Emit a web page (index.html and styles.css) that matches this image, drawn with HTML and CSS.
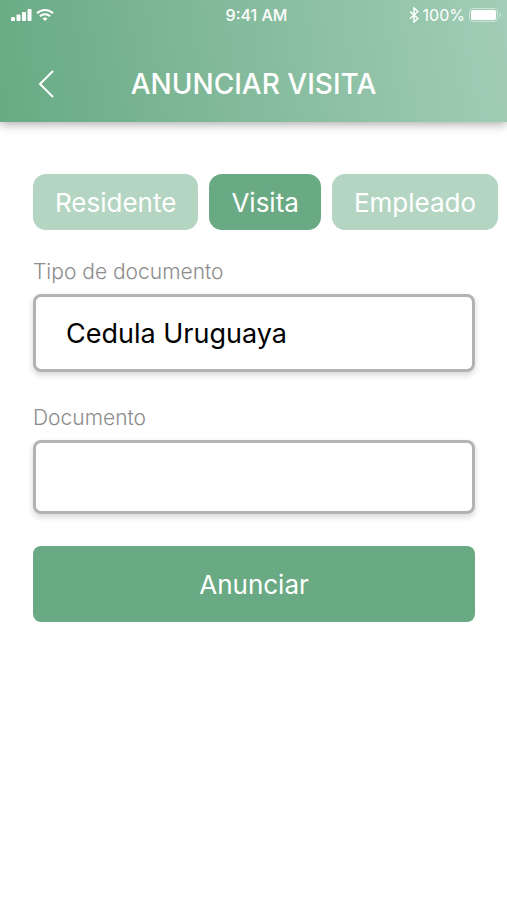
FILE: index.html
```html
<!DOCTYPE html>
<html lang="es">
<head>
  <meta charset="UTF-8">
  <meta name="viewport" content="width=device-width, initial-scale=1.0">
  <title>Anunciar visita</title>
  <link rel="stylesheet" href="styles.css">
</head>
<body>

  <header class="header">
    <div class="status">
      <div class="status-left">
        <svg width="21" height="14" viewBox="0 0 21 14" fill="currentColor">
          <rect x="0" y="9" width="4" height="4" rx="1"/>
          <rect x="5.500" y="6.500" width="4" height="6.500" rx="1"/>
          <rect x="11" y="4" width="4" height="9" rx="1"/>
          <rect x="16.500" y="1" width="4" height="12" rx="1"/>
        </svg>
        <svg width="18" height="14" viewBox="0 0 18 14" fill="none" stroke="currentColor" stroke-width="2">
          <path d="M1 5.3a11.5 11.5 0 0 1 16 0"/>
          <path d="M3.900 8.300a7.300 7.300 0 0 1 10.200 0"/>
          <path d="M9 13L6.500 10.600a3.600 3.600 0 0 1 5 0z" fill="currentColor" stroke="none"/>
        </svg>
      </div>
      <span class="hora">9:41 AM</span>
      <div class="status-right">
        <svg width="10" height="16" viewBox="0 0 10 16" fill="none" stroke="currentColor" stroke-width="1.500">
          <path d="M1 4.500l8 7-4 3.500V1l4 3.500-8 7"/>
        </svg>
        <span>100%</span>
        <svg width="33" height="14" viewBox="0 0 33 14">
          <rect x="0.500" y="0.500" width="28" height="13" rx="3.500" fill="none" stroke="currentColor" opacity="0.450"/>
          <rect x="2" y="2" width="25" height="10" rx="2" fill="currentColor"/>
          <path d="M30.500 5v4q1.500-.5 1.500-2t-1.500-2z" fill="currentColor" opacity="0.500"/>
        </svg>
      </div>
    </div>
    <div class="barra">
      <button class="volver" type="button" aria-label="Volver">
        <svg width="16" height="28" viewBox="0 0 16 28" fill="none" stroke="currentColor" stroke-width="2">
          <path d="M15 1L2 14l13 13"/>
        </svg>
      </button>
      <h1>ANUNCIAR VISITA</h1>
    </div>
  </header>

  <main class="contenido">
    <div class="tabs">
      <button class="tab" type="button">Residente</button>
      <button class="tab activo" type="button">Visita</button>
      <button class="tab" type="button">Empleado</button>
    </div>

    <form class="formulario">
      <label for="tipo">Tipo de documento</label>
      <select class="campo" id="tipo">
        <option>Cedula Uruguaya</option>
      </select>

      <label for="documento">Documento</label>
      <input class="campo" type="text" id="documento">

      <button class="anunciar" type="button">Anunciar</button>
    </form>
  </main>

</body>
</html>
```
FILE: styles.css
```css
* {
  box-sizing: border-box;
}

body {
  margin: 0;
  background: #fff;
  font-family: Inter, "Liberation Sans", sans-serif;
}

button,
input,
select {
  font-family: inherit;
}

svg {
  display: block;
}

.header {
  padding-bottom: 16px;
  background: linear-gradient(80deg, #68aa84, #a2cdb6);
  color: #fff;
  box-shadow: 0 2px 10px rgba(0, 0, 0, 0.35);
}

.status {
  display: grid;
  grid-template-columns: 1fr auto 1fr;
  align-items: center;
  height: 30px;
  padding: 0 5px 0 11px;
  font-size: 16px;
}

.status-left,
.status-right {
  display: flex;
  align-items: center;
  gap: 4px;
}

.status-right {
  justify-content: flex-end;
}

.hora {
  font-weight: 500;
}

.barra {
  display: grid;
  grid-template-columns: 64px 1fr 64px;
  align-items: center;
  height: 76px;
  padding-top: 32px;
}

.volver {
  justify-self: end;
  padding: 0;
  margin-right: 10px;
  border: none;
  background: none;
  color: #fff;
  cursor: pointer;
}

h1 {
  margin: 0;
  font-size: 28px;
  font-weight: 500;
  text-align: center;
}

.contenido {
  padding: 52px 32px 32px 33px;
}

.tabs {
  display: flex;
  gap: 11px;
}

.tab {
  flex: none;
  height: 56px;
  padding: 0 22px;
  border: none;
  border-radius: 13px;
  background: #b3d5c2;
  color: #fff;
  font-size: 26px;
  cursor: pointer;
}

.tab.activo {
  background: #69aa84;
}

.formulario {
  display: flex;
  flex-direction: column;
  margin-top: 28px;
}

label {
  margin-bottom: 8px;
  color: #8c8c8c;
  font-size: 21px;
  font-weight: 300;
  line-height: 28px;
}

.campo {
  width: 100%;
  height: 74px;
  margin-bottom: 32px;
  padding: 0 30px;
  border: 3px solid #b3b3b3;
  border-radius: 8px;
  background: #fff;
  box-shadow: 0 3px 6px rgba(0, 0, 0, 0.16);
  color: #000;
  font-size: 27px;
  appearance: none;
}

select.campo {
  height: 78px;
}

.anunciar {
  height: 76px;
  border: none;
  border-radius: 8px;
  background: #69aa84;
  color: #fff;
  font-size: 26px;
  cursor: pointer;
}
```
